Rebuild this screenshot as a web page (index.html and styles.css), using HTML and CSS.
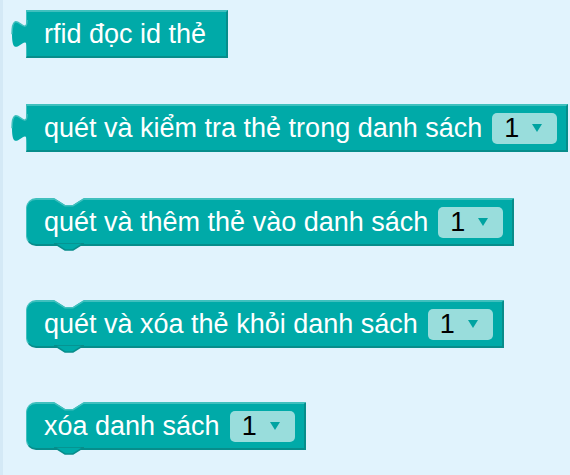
FILE: index.html
```html
<!DOCTYPE html>
<html lang="vi">
<head>
    <meta charset="UTF-8">
    <title>RFID blocks</title>
    <link rel="stylesheet" href="styles.css">
</head>
<body>

<div class="workspace">
    <!-- value block -->
    <div class="block output">
        <svg class="tab" width="17" height="29" viewBox="0 0 17 29">
            <path d="M17,0 C17,19 2,-15 2,14.3 C2,43.7 17,9.5 17,28.5 Z" fill="#00aaa8"/>
            <path d="M17,0 C17,19 2,-15 2,14.3" fill="none" stroke="#40c0be" stroke-width="1.5"/>
        </svg>
        <span class="label">rfid đọc id thẻ</span>
    </div>

    <div class="block output">
        <svg class="tab" width="17" height="29" viewBox="0 0 17 29">
            <path d="M17,0 C17,19 2,-15 2,14.3 C2,43.7 17,9.5 17,28.5 Z" fill="#00aaa8"/>
            <path d="M17,0 C17,19 2,-15 2,14.3" fill="none" stroke="#40c0be" stroke-width="1.5"/>
        </svg>
        <span class="label">quét và kiểm tra thẻ trong danh sách</span>
        <span class="dropdown">1<svg class="arrow" width="10" height="8" viewBox="0 0 10 8"><path d="M0,0 L10,0 L5,8 Z"/></svg></span>
    </div>

    <!-- statement blocks -->
    <div class="block statement">
        <svg class="notch" width="30" height="9" viewBox="0 0 30 9">
            <path d="M0,0 L11,7 L19,7 L30,0 Z" fill="#e1f3fd"/>
            <path d="M0,0.8 L11,7.8 L19,7.8 L30,0.8" fill="none" stroke="#40c0be" stroke-width="1.5"/>
        </svg>
        <span class="label">quét và thêm thẻ vào danh sách</span>
        <span class="dropdown">1<svg class="arrow" width="10" height="8" viewBox="0 0 10 8"><path d="M0,0 L10,0 L5,8 Z"/></svg></span>
        <svg class="next" width="30" height="9" viewBox="0 0 30 9">
            <path d="M0,0 L11,7 L19,7 L30,0 Z" fill="#00aaa8" stroke="#078d8b" stroke-width="1.5"/>
        </svg>
    </div>

    <div class="block statement">
        <svg class="notch" width="30" height="9" viewBox="0 0 30 9">
            <path d="M0,0 L11,7 L19,7 L30,0 Z" fill="#e1f3fd"/>
            <path d="M0,0.8 L11,7.8 L19,7.8 L30,0.8" fill="none" stroke="#40c0be" stroke-width="1.5"/>
        </svg>
        <span class="label">quét và xóa thẻ khỏi danh sách</span>
        <span class="dropdown">1<svg class="arrow" width="10" height="8" viewBox="0 0 10 8"><path d="M0,0 L10,0 L5,8 Z"/></svg></span>
        <svg class="next" width="30" height="9" viewBox="0 0 30 9">
            <path d="M0,0 L11,7 L19,7 L30,0 Z" fill="#00aaa8" stroke="#078d8b" stroke-width="1.5"/>
        </svg>
    </div>

    <div class="block statement">
        <svg class="notch" width="30" height="9" viewBox="0 0 30 9">
            <path d="M0,0 L11,7 L19,7 L30,0 Z" fill="#e1f3fd"/>
            <path d="M0,0.8 L11,7.8 L19,7.8 L30,0.8" fill="none" stroke="#40c0be" stroke-width="1.5"/>
        </svg>
        <span class="label">xóa danh sách</span>
        <span class="dropdown">1<svg class="arrow" width="10" height="8" viewBox="0 0 10 8"><path d="M0,0 L10,0 L5,8 Z"/></svg></span>
        <svg class="next" width="30" height="9" viewBox="0 0 30 9">
            <path d="M0,0 L11,7 L19,7 L30,0 Z" fill="#00aaa8" stroke="#078d8b" stroke-width="1.5"/>
        </svg>
    </div>
</div>

</body>
</html>
```

FILE: styles.css
```css
body {
    margin: 0;
    font-family: "Liberation Sans", Arial, sans-serif;
    background-color: #e1f3fd;
}

.workspace {
    height: 475px;
    box-sizing: border-box;
    border-left: 3px solid #d4e9f6;
    padding: 10px 0 0 23px;
    display: flex;
    flex-direction: column;
    align-items: flex-start;
    gap: 46px;
}

.block {
    position: relative;
    display: flex;
    align-items: center;
    box-sizing: border-box;
    height: 48px;
    padding: 0 9px 0 17px;
    background-color: #00aaa8;
    border-top: 2px solid #40c0be;
    border-left: 1px solid #40c0be;
    border-right: 2px solid #078d8b;
    border-bottom: 2px solid #078d8b;
    color: #ffffff;
    font-size: 27px;
}

.block:first-child {
    padding-right: 20px;
}

.statement {
    border-top-left-radius: 10px;
    border-bottom-left-radius: 10px;
}

.statement + .statement {
    margin-top: 8px;
}

.label {
    white-space: nowrap;
    margin-right: 10px;
}

.block:first-child .label {
    margin-right: 0;
}

.dropdown {
    display: flex;
    align-items: center;
    height: 31px;
    padding: 0 15px 0 12px;
    border-radius: 5px;
    background-color: #99dddc;
    color: #000000;
    font-size: 27px;
}

.arrow {
    margin-left: 13px;
    fill: #00a3a1;
}

.tab {
    position: absolute;
    left: -17px;
    top: 8px;
    overflow: visible;
}

.notch {
    position: absolute;
    left: 27px;
    top: -2px;
}

.next {
    position: absolute;
    left: 27px;
    top: 100%;
    margin-top: -1px;
}
```
